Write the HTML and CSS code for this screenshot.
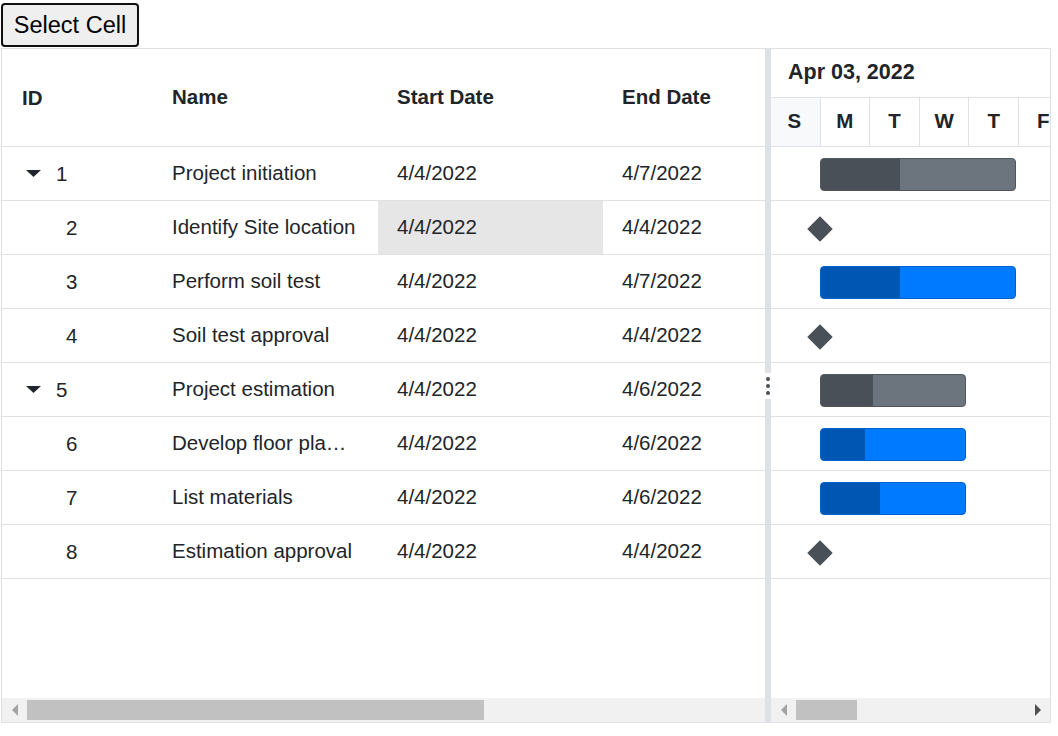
FILE: index.html
```html
<!DOCTYPE html>
<html>
<head>
<meta charset="utf-8">
<link rel="stylesheet" href="styles.css">
</head>
<body>
<div class="page">
  <button class="select-btn">Select Cell</button>
  <div class="gantt">
    <div class="grid-pane">
      <div class="grid-scroll">
        <div class="grid-row grid-head">
          <div class="cell c-id">ID</div>
          <div class="cell">Name</div>
          <div class="cell">Start Date</div>
          <div class="cell">End Date</div>
        </div>
        <div class="grid-row">
          <div class="cell c-id"><span class="expander"><svg width="15" height="7" viewBox="0 0 15 7"><polygon points="0,0 15,0 7.5,7" fill="#212529"/></svg></span>1</div>
          <div class="cell c-name">Project initiation</div>
          <div class="cell">4/4/2022</div>
          <div class="cell">4/7/2022</div>
        </div>
        <div class="grid-row">
          <div class="cell c-id"><span class="indent"></span>2</div>
          <div class="cell c-name">Identify Site location</div>
          <div class="cell selected">4/4/2022</div>
          <div class="cell">4/4/2022</div>
        </div>
        <div class="grid-row">
          <div class="cell c-id"><span class="indent"></span>3</div>
          <div class="cell c-name">Perform soil test</div>
          <div class="cell">4/4/2022</div>
          <div class="cell">4/7/2022</div>
        </div>
        <div class="grid-row">
          <div class="cell c-id"><span class="indent"></span>4</div>
          <div class="cell c-name">Soil test approval</div>
          <div class="cell">4/4/2022</div>
          <div class="cell">4/4/2022</div>
        </div>
        <div class="grid-row">
          <div class="cell c-id"><span class="expander"><svg width="15" height="7" viewBox="0 0 15 7"><polygon points="0,0 15,0 7.5,7" fill="#212529"/></svg></span>5</div>
          <div class="cell c-name">Project estimation</div>
          <div class="cell">4/4/2022</div>
          <div class="cell">4/6/2022</div>
        </div>
        <div class="grid-row">
          <div class="cell c-id"><span class="indent"></span>6</div>
          <div class="cell c-name">Develop floor plan for estimation</div>
          <div class="cell">4/4/2022</div>
          <div class="cell">4/6/2022</div>
        </div>
        <div class="grid-row">
          <div class="cell c-id"><span class="indent"></span>7</div>
          <div class="cell c-name">List materials</div>
          <div class="cell">4/4/2022</div>
          <div class="cell">4/6/2022</div>
        </div>
        <div class="grid-row">
          <div class="cell c-id"><span class="indent"></span>8</div>
          <div class="cell c-name">Estimation approval</div>
          <div class="cell">4/4/2022</div>
          <div class="cell">4/4/2022</div>
        </div>
      </div>
      <div class="hscroll">
        <div class="arrow-box"><span class="arr-left dim"></span></div>
        <div class="thumb thumb-grid"></div>
      </div>
    </div>
    <div class="splitter">
      <div class="handle"><span></span><span></span><span></span></div>
    </div>
    <div class="chart-pane">
      <div class="chart-head">
        <div class="week">Apr 03, 2022</div>
        <div class="days">
          <div class="day weekend">S</div>
          <div class="day">M</div>
          <div class="day">T</div>
          <div class="day">W</div>
          <div class="day">T</div>
          <div class="day">F</div>
        </div>
      </div>
      <div class="chart-body">
        <div class="chart-row"><div class="bar parent w4"><div class="prog" style="width:79px"></div></div></div>
        <div class="chart-row"><div class="milestone"></div></div>
        <div class="chart-row"><div class="bar child w4"><div class="prog" style="width:79px"></div></div></div>
        <div class="chart-row"><div class="milestone"></div></div>
        <div class="chart-row"><div class="bar parent w3"><div class="prog" style="width:52px"></div></div></div>
        <div class="chart-row"><div class="bar child w3"><div class="prog" style="width:44px"></div></div></div>
        <div class="chart-row"><div class="bar child w3"><div class="prog" style="width:59px"></div></div></div>
        <div class="chart-row"><div class="milestone"></div></div>
      </div>
      <div class="hscroll">
        <div class="arrow-box"><span class="arr-left dim"></span></div>
        <div class="thumb thumb-chart"></div>
        <div class="spacer"></div>
        <div class="arrow-box"><span class="arr-right"></span></div>
      </div>
    </div>
  </div>
</div>
</body>
</html>
```

FILE: styles.css
```css
* { box-sizing: border-box; }
html, body { margin: 0; padding: 0; background: #fff; }
body {
  font-family: "Liberation Sans", Arial, sans-serif;
  color: #212529;
}
.page {
  padding: 3px 0 0 1px;
  width: 1058px;
}
.select-btn {
  display: block;
  width: 138px;
  height: 44px;
  margin: 0;
  padding: 0;
  font-family: "Liberation Sans", Arial, sans-serif;
  font-size: 23.5px;
  color: #000;
  background: #efefef;
  border: 2px solid #101010;
  border-radius: 4px;
}
.gantt {
  margin-top: 1px;
  width: 1050px;
  height: 675px;
  border: 1px solid #dee2e6;
  display: grid;
  grid-template-columns: 763px 6px 279px;
  font-size: 20.5px;
}
.grid-pane, .chart-pane {
  display: flex;
  flex-direction: column;
  overflow: hidden;
  min-width: 0;
}
.grid-scroll {
  flex: 1;
  overflow: hidden;
}
.grid-row {
  display: grid;
  grid-template-columns: 151px 225px 225px 225px;
  width: 826px;
  height: 54px;
  border-bottom: 1px solid #dee2e6;
}
.grid-head {
  height: 98px;
  font-weight: bold;
  font-size: 20.5px;
}
.cell {
  padding: 0 19px;
  line-height: 51px;
  white-space: nowrap;
  overflow: hidden;
  text-overflow: ellipsis;
}
.c-name { padding-right: 22px; }
.grid-head .cell { line-height: 95px; }
.c-id {
  padding-left: 20px;
  display: flex;
  align-items: center;
  text-overflow: clip;
}
.expander {
  width: 34px;
  flex: none;
  display: flex;
  align-items: center;
  padding-left: 4px;
}
.expander svg { display: block; }
.indent { width: 44px; flex: none; }
.selected { background: #e6e6e6; }

.hscroll {
  height: 24px;
  flex: none;
  background: #f1f1f1;
  display: flex;
  align-items: center;
}
.arrow-box {
  width: 25px;
  height: 24px;
  flex: none;
  display: flex;
  align-items: center;
  justify-content: center;
}
.arr-left {
  width: 0; height: 0;
  border-top: 6px solid transparent;
  border-bottom: 6px solid transparent;
  border-right: 6px solid #505050;
}
.arr-right {
  width: 0; height: 0;
  border-top: 6px solid transparent;
  border-bottom: 6px solid transparent;
  border-left: 6px solid #505050;
}
.arr-left.dim { border-right-color: #a3a3a3; }
.thumb {
  height: 20px;
  background: #c1c1c1;
  flex: none;
}
.thumb-grid { width: 457px; }
.thumb-chart { width: 61px; }
.spacer { flex: 1; }

.splitter {
  background: #dee2e6;
  display: flex;
  align-items: center;
  justify-content: center;
}
.handle {
  width: 6px;
  height: 26px;
  background: #fff;
  display: flex;
  flex-direction: column;
  align-items: center;
  justify-content: center;
  gap: 3px;
}
.handle span {
  width: 4px;
  height: 4px;
  border-radius: 50%;
  background: #495057;
}

.chart-head { flex: none; }
.week {
  height: 49px;
  line-height: 47px;
  border-bottom: 1px solid #dee2e6;
  padding-left: 17px;
  font-weight: bold;
  font-size: 21.5px;
}
.days {
  display: grid;
  grid-template-columns: repeat(6, 49.6px);
  height: 49px;
  border-bottom: 1px solid #dee2e6;
}
.day {
  border-right: 1px solid #dee2e6;
  text-align: center;
  line-height: 46px;
  font-weight: bold;
  font-size: 20.5px;
}
.day:first-child { padding-right: 2px; }
.day.weekend { background: #f8f9fa; }
.chart-body {
  flex: 1;
  overflow: hidden;
}
.chart-row {
  height: 54px;
  border-bottom: 1px solid #dee2e6;
  display: flex;
  align-items: center;
  padding-top: 2px;
}
.bar {
  margin-left: 49px;
  height: 33px;
  border-radius: 4px;
  overflow: hidden;
  display: flex;
}
.bar.w4 { width: 196px; }
.bar.w3 { width: 146px; }
.bar.parent {
  background: #6c757d;
  border: 1px solid #50565c;
}
.bar.parent .prog { background: #495057; }
.bar.child {
  background: #007bff;
  border: 1px solid #0062cc;
}
.bar.child .prog { background: #0056b3; }
.prog { height: 100%; }
.milestone {
  margin-left: 40px;
  width: 18px;
  height: 18px;
  background: #495057;
  transform: rotate(45deg);
}
```
